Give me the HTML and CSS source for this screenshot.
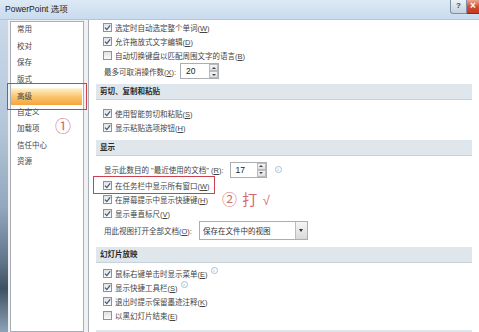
FILE: index.html
```html
<!DOCTYPE html>
<html lang="en">
<head>
  <meta charset="UTF-8" />
  <title>PowerPoint 选项</title>
  <link rel="stylesheet" href="styles.css">
</head>
<body>
  <div class="window">
    <div class="titlebar">
      <span class="title">PowerPoint 选项</span>
      <div class="caption-btns">
        <span class="help">?</span>
        <span class="close">×</span>
      </div>
    </div>
    <div class="frame">
      <div class="glass"></div>
      <div class="body">
        <ul class="nav">
          <li>常用</li>
          <li>校对</li>
          <li>保存</li>
          <li>版式</li>
          <li class="active">高级<span class="mark-box"></span></li>
          <li>自定义</li>
          <li>加载项</li>
          <li>信任中心</li>
          <li>资源</li>
          <span class="note note-1">①</span>
        </ul>

        <div class="content">
          <div class="group">
            <div class="row"><span class="cb on"><svg viewBox="0 0 8 8"><path d="M1 4.2 3.2 6.3 7 1.5" /></svg></span><span>选定时自动选定整个单词(<u>W</u>)</span></div>
            <div class="row"><span class="cb on"><svg viewBox="0 0 8 8"><path d="M1 4.2 3.2 6.3 7 1.5" /></svg></span><span>允许拖放式文字编辑(<u>D</u>)</span></div>
            <div class="row"><span class="cb"></span><span>自动切换键盘以匹配周围文字的语言(<u>B</u>)</span></div>
            <div class="spin-row">
              <span>最多可取消操作数(<u>X</u>):</span>
              <span class="spin spin-20"><span class="val">20</span><span class="arrows"><span class="up"></span><span class="down"></span></span></span>
            </div>
          </div>

          <div class="section-head head-1">剪切、复制和粘贴</div>
          <div class="group group-2">
            <div class="row"><span class="cb on"><svg viewBox="0 0 8 8"><path d="M1 4.2 3.2 6.3 7 1.5" /></svg></span><span>使用智能剪切和粘贴(<u>S</u>)</span></div>
            <div class="row"><span class="cb on"><svg viewBox="0 0 8 8"><path d="M1 4.2 3.2 6.3 7 1.5" /></svg></span><span>显示粘贴选项按钮(<u>H</u>)</span></div>
          </div>

          <div class="section-head head-2">显示</div>
          <div class="group group-3">
            <div class="spin-row spin-row-2">
              <span>显示此数目的 "最近使用的文档" (<u>R</u>):</span>
              <span class="spin spin-17"><span class="val">17</span><span class="arrows"><span class="up"></span><span class="down"></span></span></span>
              <span class="info">i</span>
            </div>
            <div class="row marked"><span class="cb on"><svg viewBox="0 0 8 8"><path d="M1 4.2 3.2 6.3 7 1.5" /></svg></span><span>在任务栏中显示所有窗口(<u>W</u>)</span><span class="mark-box-2"></span></div>
            <div class="row marked"><span class="cb on"><svg viewBox="0 0 8 8"><path d="M1 4.2 3.2 6.3 7 1.5" /></svg></span><span>在屏幕提示中显示快捷键(<u>H</u>)</span><span class="note note-2">② 打 <span class="tick">√</span></span></div>
            <div class="row"><span class="cb on"><svg viewBox="0 0 8 8"><path d="M1 4.2 3.2 6.3 7 1.5" /></svg></span><span>显示垂直标尺(<u>V</u>)</span></div>
            <div class="select-row">
              <span>用此视图打开全部文档(<u>O</u>):</span>
              <span class="select"><span class="val">保存在文件中的视图</span><span class="drop"></span></span>
            </div>
          </div>

          <div class="section-head head-3">幻灯片放映</div>
          <div class="group group-4">
            <div class="row"><span class="cb on"><svg viewBox="0 0 8 8"><path d="M1 4.2 3.2 6.3 7 1.5" /></svg></span><span>鼠标右键单击时显示菜单(<u>E</u>)</span><span class="info info-sm">i</span></div>
            <div class="row"><span class="cb on"><svg viewBox="0 0 8 8"><path d="M1 4.2 3.2 6.3 7 1.5" /></svg></span><span>显示快捷工具栏(<u>S</u>)</span><span class="info info-sm">i</span></div>
            <div class="row"><span class="cb on"><svg viewBox="0 0 8 8"><path d="M1 4.2 3.2 6.3 7 1.5" /></svg></span><span>退出时提示保留墨迹注释(<u>K</u>)</span></div>
            <div class="row"><span class="cb"></span><span>以黑幻灯片结束(<u>E</u>)</span></div>
          </div>

          <div class="section-head head-4">&nbsp;</div>
        </div>
      </div>
    </div>
  </div>
</body>
</html>
```

FILE: styles.css
```css
* { margin: 0; padding: 0; box-sizing: border-box; }
html, body {
  width: 479px;
  height: 332px;
  overflow: hidden;
}
body {
  font-family: "Liberation Sans", "Noto Sans CJK SC", sans-serif;
  font-size: 7.5px;
  color: #444;
  background: #f0f0f0;
}
u { text-decoration: underline; text-underline-offset: 1px; }

.window {
  display: flex;
  flex-direction: column;
  height: 332px;
}
.titlebar {
  height: 20px;
  flex: none;
  display: flex;
  justify-content: space-between;
  align-items: flex-start;
  background: linear-gradient(#dde9f5, #c9dbee);
  border-bottom: 1px solid #b4c4d4;
}
.title {
  font-size: 8.5px;
  color: #1c1c1c;
  line-height: 19px;
  padding-left: 5px;
}
.caption-btns {
  display: flex;
  height: 14px;
}
.help {
  width: 17px;
  background: linear-gradient(#edf2f7, #c5d1df);
  border: 1px solid #7f90a3;
  border-top: none;
  border-radius: 0 0 0 3px;
  font-size: 8px;
  font-weight: bold;
  color: #3b4a5c;
  text-align: center;
  line-height: 12px;
}
.close {
  width: 12px;
  background: linear-gradient(#eca592, #cf4a2f 55%, #c03a22);
  border-bottom: 1px solid #8a2a1a;
  color: #fff;
  font-size: 10px;
  font-weight: bold;
  text-align: center;
  line-height: 12px;
}

.frame {
  flex: 1;
  display: flex;
  min-height: 0;
}
.glass {
  width: 8px;
  flex: none;
  background: linear-gradient(#c9d9ea 0%, #b3c6d9 35%, #93a8bd 60%, #5f7388 78%, #3f5063 86%, #8ea3b8 100%);
}
.body {
  flex: 1;
  display: flex;
  background: #f0f0f0;
  padding-left: 2px;
}

/* left navigation */
.nav {
  width: 74px;
  flex: none;
  margin-top: 1px;
  background: #fff;
  border: 1px solid #a7aeb7;
  list-style: none;
  position: relative;
}
.nav li {
  height: 16.5px;
  line-height: 16.5px;
  padding-left: 6px;
  margin-right: 1px;
  position: relative;
  color: #444;
}
.nav li.active {
  background: linear-gradient(#fdeec4, #fbc772 45%, #f6a43c 100%);
  border-top: 1px solid #fff3d6;
  line-height: 15px;
}
.mark-box {
  position: absolute;
  left: -4px;
  right: -5px;
  top: -6px;
  bottom: -5px;
  border: 1.5px solid #c9434e;
}
.note {
  position: absolute;
  line-height: 1;
  white-space: nowrap;
  color: #d46a70;
  font-family: "Noto Sans CJK SC", sans-serif;
}
.note-1 {
  left: 44px;
  top: 95px;
  font-size: 16px;
}

/* right content */
.content {
  flex: 1;
  margin-left: 4px;
  background: #fff;
  border-left: 1px solid #a7aeb7;
}
.group { padding-left: 14px; }
.group-2 { margin-top: 6px; }
.group-3 { margin-top: 5px; }
.group-4 { margin-top: 3px; }

.row {
  height: 14px;
  display: flex;
  align-items: center;
  gap: 3px;
  white-space: nowrap;
}
.marked { position: relative; }
.cb {
  width: 9px;
  height: 9px;
  flex: none;
  border: 1px solid #929292;
  background: linear-gradient(#e2e2e2, #fbfbfb);
  display: flex;
  align-items: center;
  justify-content: center;
}
.cb svg {
  width: 7px;
  height: 7px;
  fill: none;
  stroke: #3c5a86;
  stroke-width: 1.4;
}

.spin-row, .select-row {
  display: flex;
  align-items: center;
  gap: 4px;
  padding-left: 1px;
  white-space: nowrap;
}
.spin-row { height: 18px; }
.spin-row-2 { height: 17px; }
.select-row { height: 20px; }

.spin {
  height: 16px;
  border: 1px solid #abadb3;
  display: flex;
  justify-content: space-between;
  background: #fff;
}
.spin-20 { width: 39px; }
.spin-17 { width: 37px; margin-left: 2px; }
.spin .val {
  padding-left: 5px;
  line-height: 14px;
  font-size: 8.5px;
  color: #222;
}
.arrows {
  width: 9px;
  display: flex;
  flex-direction: column;
}
.arrows span {
  flex: 1;
  background: linear-gradient(#f6f6f6, #dedede);
  border: 1px solid #b8bdc4;
  position: relative;
}
.arrows .up::after, .arrows .down::after {
  content: "";
  position: absolute;
  left: 1.5px;
  top: 1.5px;
  border-left: 2px solid transparent;
  border-right: 2px solid transparent;
}
.arrows .up::after { border-bottom: 2px solid #444; }
.arrows .down::after { border-top: 2px solid #444; }

.info {
  width: 7px;
  height: 7px;
  border-radius: 50%;
  border: 1px solid #a9bdd4;
  color: #7d9cc0;
  font-family: "Liberation Serif", serif;
  font-size: 5px;
  line-height: 5px;
  text-align: center;
  margin-left: 4px;
}
.info-sm { margin-left: 0; margin-top: -5px; }

.select {
  width: 109px;
  height: 19px;
  margin-left: 3px;
  border: 1px solid #abadb3;
  display: flex;
  justify-content: space-between;
  align-items: center;
}
.select .val { padding-left: 3px; color: #333; }
.drop {
  width: 12px;
  height: 17px;
  background: linear-gradient(#f6f6f6, #d9d9d9);
  border-left: 1px solid #b8bdc4;
  position: relative;
}
.drop::after {
  content: "";
  position: absolute;
  left: 3px;
  top: 7px;
  border-left: 2.5px solid transparent;
  border-right: 2.5px solid transparent;
  border-top: 3px solid #333;
}

.section-head {
  height: 16px;
  margin: 0 7px 0 7px;
  background: #dfe7ec;
  border-bottom: 1px solid #c6d1d9;
  font-weight: bold;
  color: #2a2a2a;
  padding-left: 4px;
  line-height: 15px;
}
.head-1 { margin-top: 4px; }
.head-2 { margin-top: 6px; }
.head-3 { margin-top: 7px; }
.head-4 { margin-top: 8px; }

.mark-box-2 {
  position: absolute;
  left: -10px;
  top: -2px;
  width: 122px;
  height: 18px;
  border: 1.5px solid #c9434e;
}
.note-2 {
  left: 119px;
  top: 50%;
  transform: translateY(-50%);
  font-size: 15px;
  letter-spacing: 1px;
}
.tick {
  font-family: "Liberation Sans", sans-serif;
  font-size: 13px;
}
```
